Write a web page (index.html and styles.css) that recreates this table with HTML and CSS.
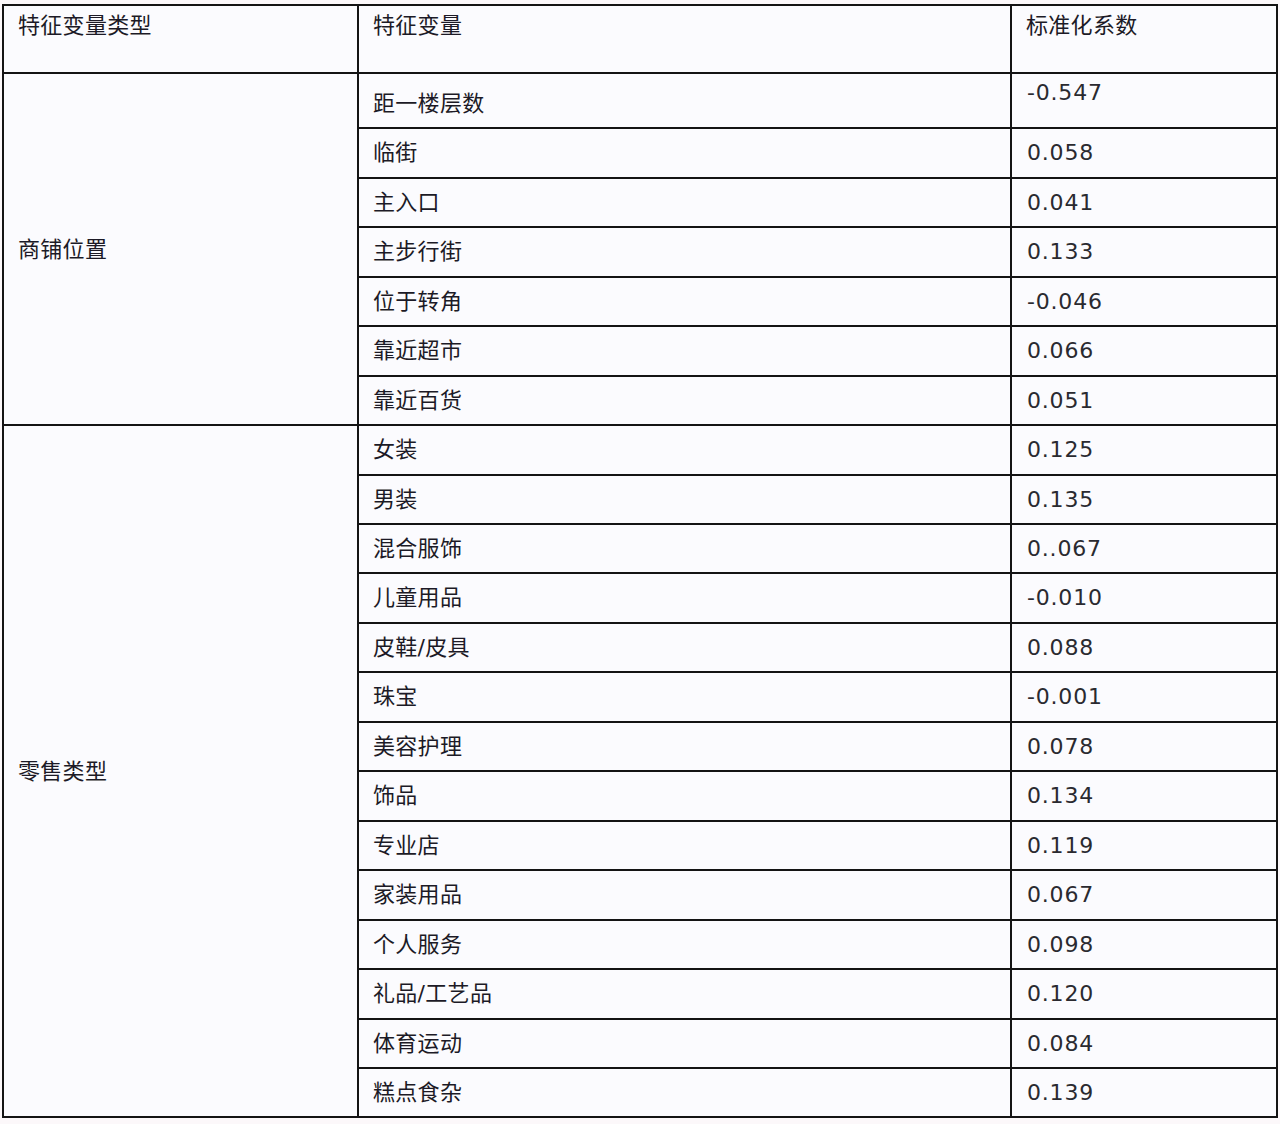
FILE: index.html
```html
<!DOCTYPE html>
<html lang="zh">
<head>
<meta charset="utf-8">
<title>特征变量</title>
<link rel="stylesheet" href="styles.css">
</head>
<body>
<table class="grid">
  <colgroup>
    <col class="c1">
    <col class="c2">
    <col class="c3">
  </colgroup>
  <tr class="head">
    <td>特征变量类型</td>
    <td>特征变量</td>
    <td>标准化系数</td>
  </tr>
  <tr class="first">
    <td class="group" rowspan="7">商铺位置</td>
    <td class="name low">距一楼层数</td>
    <td class="num top">-0.547</td>
  </tr>
  <tr class="r50"><td class="name">临街</td><td class="num">0.058</td></tr>
  <tr class="r49"><td class="name">主入口</td><td class="num">0.041</td></tr>
  <tr class="r50"><td class="name">主步行街</td><td class="num">0.133</td></tr>
  <tr class="r49"><td class="name">位于转角</td><td class="num">-0.046</td></tr>
  <tr class="r50"><td class="name">靠近超市</td><td class="num">0.066</td></tr>
  <tr class="r49"><td class="name">靠近百货</td><td class="num">0.051</td></tr>
  <tr class="r50">
    <td class="group" rowspan="14">零售类型</td>
    <td class="name">女装</td><td class="num">0.125</td>
  </tr>
  <tr class="r49"><td class="name">男装</td><td class="num">0.135</td></tr>
  <tr class="r49"><td class="name">混合服饰</td><td class="num">0..067</td></tr>
  <tr class="r50"><td class="name">儿童用品</td><td class="num">-0.010</td></tr>
  <tr class="r49"><td class="name">皮鞋/皮具</td><td class="num">0.088</td></tr>
  <tr class="r50"><td class="name">珠宝</td><td class="num">-0.001</td></tr>
  <tr class="r49"><td class="name">美容护理</td><td class="num">0.078</td></tr>
  <tr class="r50"><td class="name">饰品</td><td class="num">0.134</td></tr>
  <tr class="r49"><td class="name">专业店</td><td class="num">0.119</td></tr>
  <tr class="r50"><td class="name">家装用品</td><td class="num">0.067</td></tr>
  <tr class="r49"><td class="name">个人服务</td><td class="num">0.098</td></tr>
  <tr class="r50"><td class="name">礼品/工艺品</td><td class="num">0.120</td></tr>
  <tr class="r49"><td class="name">体育运动</td><td class="num">0.084</td></tr>
  <tr class="r48"><td class="name">糕点食杂</td><td class="num">0.139</td></tr>
</table>
</body>
</html>
```

FILE: styles.css
```css
html, body {
  margin: 0;
  padding: 0;
  background: #fcf8fa;
}

body {
  padding: 4px 0 0 2px;
  font-family: "DejaVu Sans", "Noto Sans CJK SC", sans-serif;
  color: #1c1a26;
}

.grid {
  border-collapse: collapse;
  table-layout: fixed;
  width: 1274px;
  background: #fbfbfe;
  border: 2px solid #141414;
}

.c1 { width: 355px; }
.c2 { width: 653px; }
.c3 { width: 266px; }

.grid td {
  border: 2px solid #141414;
  padding: 0 10px 0 14px;
  font-size: 22px;
  line-height: 26px;
  vertical-align: middle;
  white-space: nowrap;
  letter-spacing: 0.3px;
}

.head td {
  height: 68px;
  box-sizing: border-box;
  vertical-align: top;
  padding-top: 7px;
}

.first td { height: 47px; }
.r50 td { height: 48px; }
.r49 td { height: 47px; }
.r48 td { height: 47px; }

.grid td.group {
  padding-top: 2px;
}

.grid td.num {
  color: #2a2a30;
  letter-spacing: 0.8px;
  padding-left: 15px;
}

.grid td.top {
  vertical-align: top;
  padding-top: 6px;
}

.grid td.low {
  padding-top: 6px;
}
```
